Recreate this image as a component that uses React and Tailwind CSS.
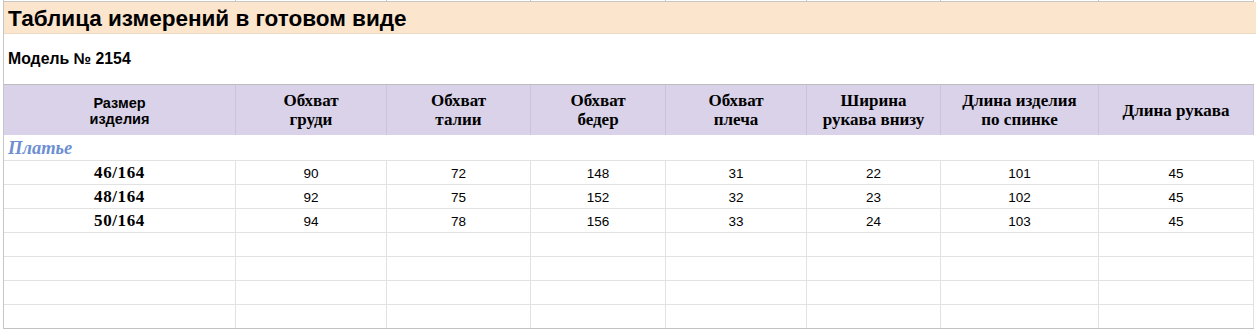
const cols = 'grid grid-cols-[232px_151px_144px_135px_141px_134px_158px_155px]';

const head = [
  { t: ['Размер', 'изделия'], sans: true },
  { t: ['Обхват', 'груди'] },
  { t: ['Обхват', 'талии'] },
  { t: ['Обхват', 'бедер'] },
  { t: ['Обхват', 'плеча'] },
  { t: ['Ширина', 'рукава внизу'] },
  { t: ['Длина изделия', 'по спинке'] },
  { t: ['Длина рукава'] },
];

const rows = [
  ['46/164', 90, 72, 148, 31, 22, 101, 45],
  ['48/164', 92, 75, 152, 32, 23, 102, 45],
  ['50/164', 94, 78, 156, 33, 24, 103, 45],
  ['', '', '', '', '', '', '', ''],
  ['', '', '', '', '', '', '', ''],
  ['', '', '', '', '', '', '', ''],
  ['', '', '', '', '', '', '', ''],
];

const sans = "font-['Liberation_Sans',Arial,sans-serif]";
const serif = "font-['Liberation_Serif','Times_New_Roman',serif]";

export default function App() {
  return (
    <div className={`w-[1256px] h-[329px] overflow-hidden bg-white pl-[3px] ${sans} text-black`}>
      <div className="w-[1251px] border-l border-[#c6c6c6]">
        {/* strip of the row above */}
        <div className={`${cols} h-[2px] border-b border-[#c6c6c6]`}>
          {head.map((_, i) => (
            <div key={i} className="border-r border-[#c6c6c6]" />
          ))}
        </div>

        {/* title band */}
        <div className="h-[32px] w-[1253px] bg-[#fce5cd] border-b border-[#ecd9c4] flex items-center pl-[4px] pt-[3px]">
          <span className="text-[22.5px] font-bold leading-none">Таблица измерений в готовом виде</span>
        </div>

        {/* model row */}
        <div className="h-[51px] border-b border-[#bdbdbd] flex items-center pl-[4px]">
          <span className="text-[15.8px] font-bold leading-none">Модель № 2154</span>
        </div>

        {/* header */}
        <div className={`${cols} h-[50px] bg-[#d9d2e9]`}>
          {head.map((h, i) => (
            <div
              key={i}
              className={`border-r border-[#cbc3dc] flex flex-col items-center justify-center text-center font-bold ${
                h.sans ? `${sans} text-[14.5px] leading-[16px] pt-[2px]` : `${serif} text-[17px] leading-[19px]`
              }`}
            >
              {h.t.map((l) => (
                <span key={l}>{l}</span>
              ))}
            </div>
          ))}
        </div>

        {/* section */}
        <div className="h-[26px] border-b border-[#e2e2e2] flex items-center pl-[4px] pt-[2px]">
          <span className={`${serif} italic font-bold text-[18.5px] leading-none text-[#6d8fd2]`}>Платье</span>
        </div>

        {rows.map((r, ri) => (
          <div
            key={ri}
            className={`${cols} h-[24px] border-b ${ri === rows.length - 1 ? 'border-[#c2c2c2]' : 'border-[#e2e2e2]'}`}
          >
            {r.map((c, ci) => (
              <div
                key={ci}
                className={`border-r border-[#e2e2e2] flex items-center justify-center ${
                  ci === 0
                    ? `${serif} font-bold text-[17px] tracking-[0.6px] pb-[1px]`
                    : 'text-[13.5px] pt-[3px]'
                } leading-none`}
              >
                {c}
              </div>
            ))}
          </div>
        ))}
      </div>
    </div>
  );
}
